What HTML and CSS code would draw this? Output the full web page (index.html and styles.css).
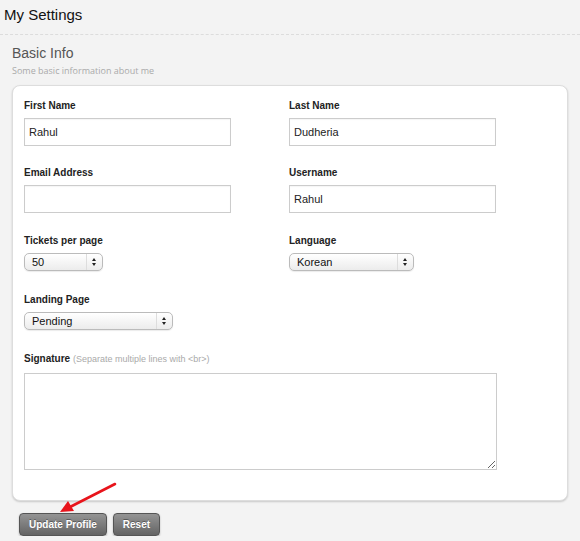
FILE: index.html
```html
<!DOCTYPE html>
<html lang="en">
<head>
    <meta charset="UTF-8">
    <meta name="viewport" content="width=device-width, initial-scale=1.0">
    <title>My Settings</title>
    <link rel="stylesheet" href="styles.css">
</head>
<body>
    <h1 class="page-title">My Settings</h1>
    <div class="section">
        <h2>Basic Info</h2>
        <p class="sub">Some basic information about me</p>
        <div class="card">
            <div class="grid">
                <div class="field">
                    <label>First Name</label>
                    <input type="text" class="text" value="Rahul">
                </div>
                <div class="field">
                    <label>Last Name</label>
                    <input type="text" class="text" value="Dudheria">
                </div>
                <div class="field wide-gap">
                    <label>Email Address</label>
                    <input type="text" class="text" value="">
                </div>
                <div class="field wide-gap">
                    <label>Username</label>
                    <input type="text" class="text" value="Rahul">
                </div>
                <div class="field sel">
                    <label>Tickets per page</label>
                    <div class="select w-small"><span>50</span><i class="arrows"></i></div>
                </div>
                <div class="field sel">
                    <label>Language</label>
                    <div class="select w-mid"><span>Korean</span><i class="arrows"></i></div>
                </div>
                <div class="field sel">
                    <label>Landing Page</label>
                    <div class="select w-big"><span>Pending</span><i class="arrows"></i></div>
                </div>
            </div>
            <div class="field sig">
                <label>Signature <em>(Separate multiple lines with &lt;br&gt;)</em></label>
                <textarea></textarea>
            </div>
        </div>
        <div class="buttons">
            <button class="btn">Update Profile</button>
            <button class="btn">Reset</button>
        </div>
    </div>
    <svg class="pointer" width="580" height="541" viewBox="0 0 580 541">
        <line x1="115" y1="484" x2="70" y2="507" stroke="#e8141b" stroke-width="2.6" stroke-linecap="round"/>
        <polygon points="60,512 68,501 74,511" fill="#e8141b"/>
    </svg>
</body>
</html>
```

FILE: styles.css
```css
body { margin: 0; background: #f3f3f3; font-family: "Liberation Sans", Arial, sans-serif; color: #222; position: relative; }
.page-title { margin: 0; padding: 6px 4px 0; height: 28px; font-size: 15px; font-weight: normal; color: #111; border-bottom: 1px dashed #dcdcdc; }
.section { padding: 9px 0 0 12px; }
.section h2 { margin: 0; font-size: 14px; font-weight: normal; color: #555; line-height: 18px; }
.sub { margin: 3px 0 0; font-family: "Open Sans", sans-serif; font-size: 9px; color: #aaa; line-height: 12px; }
.card { margin-top: 8px; width: 532px; background: #fff; border: 1px solid #ddd; border-radius: 8px; box-shadow: 0 1px 2px rgba(0,0,0,0.18); padding: 14px 11px 30px; }
.grid { display: grid; grid-template-columns: 265px 265px; }
.field { margin-bottom: 21px; }
.field.wide-gap { margin-bottom: 22px; }
.field.sel { margin-bottom: 23px; }
.field label { display: block; font-size: 10px; font-weight: bold; line-height: 12px; margin-bottom: 6px; color: #222; }
.field label em { font-style: normal; font-weight: normal; color: #aaa; font-size: 9px; }
.text { box-sizing: border-box; width: 207px; height: 28px; border: 1px solid #ccc; padding: 0 4px; font-family: "Liberation Sans", Arial, sans-serif; font-size: 11px; color: #222; margin: 0; box-shadow: inset 0 1px 1px rgba(0,0,0,0.04); }
.select { box-sizing: border-box; position: relative; height: 18px; border: 1px solid #bbb; border-radius: 5px; background: linear-gradient(#fff, #ececec); font-size: 11px; line-height: 16px; padding-left: 7px; box-shadow: 0 1px 1px rgba(0,0,0,0.08); }
.select span { color: #111; }
.arrows { position: absolute; right: 0; top: 0; width: 15px; height: 16px; border-left: 1px solid #ddd; }
.arrows::before, .arrows::after { content: ""; position: absolute; left: 5px; border-left: 2.5px solid transparent; border-right: 2.5px solid transparent; }
.arrows::before { top: 4px; border-bottom: 3px solid #222; }
.arrows::after { top: 9px; border-top: 3px solid #222; }
.w-small { width: 79px; }
.w-mid { width: 125px; }
.w-big { width: 149px; }
.sig { margin-bottom: 0; }
.sig label { margin-bottom: 8px; }
textarea { display: block; box-sizing: border-box; width: 473px; height: 97px; margin: 0; border: 1px solid #ccc; }
.buttons { display: flex; gap: 6px; margin: 12px 0 0 7px; }
.btn { height: 23px; padding: 0 9px; border: 1px solid #555; border-radius: 4px; background: linear-gradient(#949494, #646464); color: #fff; font-family: "Liberation Sans", Arial, sans-serif; font-size: 10px; font-weight: bold; text-shadow: 0 -1px 0 rgba(0,0,0,0.35); box-shadow: 0 1px 2px rgba(0,0,0,0.25); }
.pointer { position: absolute; left: 0; top: 0; pointer-events: none; }
```
